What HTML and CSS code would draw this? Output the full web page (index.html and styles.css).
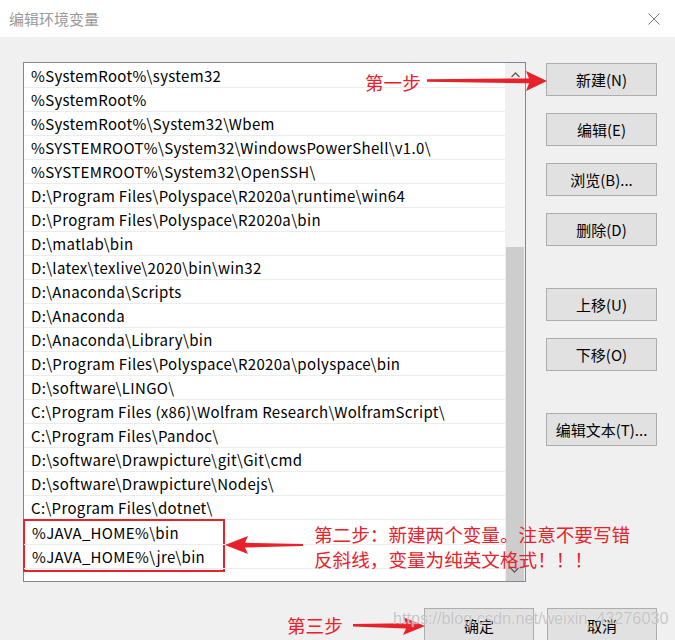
FILE: index.html
```html
<!DOCTYPE html>
<html lang="zh-CN">
<head>
    <meta charset="UTF-8">
    <title>编辑环境变量</title>
    <link rel="stylesheet" href="styles.css">
</head>
<body>
    <div class="window">
        <header class="titlebar">
            <span class="title">编辑环境变量</span>
            <svg class="close" width="12" height="12" viewBox="0 0 12 12">
                <path d="M0.5 0.5 L11.5 11.5 M11.5 0.5 L0.5 11.5" stroke="#7a7a7a" stroke-width="1" fill="none"/>
            </svg>
        </header>

        <div class="content">
            <div class="main">
                <div class="listbox">
                    <div class="rows">
                        <div class="row">%SystemRoot%\system32</div>
                        <div class="row">%SystemRoot%</div>
                        <div class="row">%SystemRoot%\System32\Wbem</div>
                        <div class="row">%SYSTEMROOT%\System32\WindowsPowerShell\v1.0\</div>
                        <div class="row">%SYSTEMROOT%\System32\OpenSSH\</div>
                        <div class="row">D:\Program Files\Polyspace\R2020a\runtime\win64</div>
                        <div class="row">D:\Program Files\Polyspace\R2020a\bin</div>
                        <div class="row">D:\matlab\bin</div>
                        <div class="row">D:\latex\texlive\2020\bin\win32</div>
                        <div class="row">D:\Anaconda\Scripts</div>
                        <div class="row">D:\Anaconda</div>
                        <div class="row">D:\Anaconda\Library\bin</div>
                        <div class="row">D:\Program Files\Polyspace\R2020a\polyspace\bin</div>
                        <div class="row">D:\software\LINGO\</div>
                        <div class="row">C:\Program Files (x86)\Wolfram Research\WolframScript\</div>
                        <div class="row">C:\Program Files\Pandoc\</div>
                        <div class="row">D:\software\Drawpicture\git\Git\cmd</div>
                        <div class="row">D:\software\Drawpicture\Nodejs\</div>
                        <div class="row">C:\Program Files\dotnet\</div>
                        <div class="highlight">
                            <div class="row">%JAVA_HOME%\bin</div>
                            <div class="row">%JAVA_HOME%\jre\bin</div>
                        </div>
                    </div>
                    <div class="scrollbar">
                        <div class="sb-arrow">
                            <svg width="9" height="6" viewBox="0 0 9 6"><path d="M0.5 5 L4.5 1 L8.5 5" stroke="#606060" stroke-width="1.4" fill="none"/></svg>
                        </div>
                        <div class="thumb"></div>
                        <svg class="sb-down" width="9" height="6" viewBox="0 0 9 6"><path d="M0.5 1 L4.5 5 L8.5 1" stroke="#606060" stroke-width="1.4" fill="none"/></svg>
                    </div>
                </div>

                <div class="side-buttons">
                    <button class="btn">新建(N)</button>
                    <button class="btn">编辑(E)</button>
                    <button class="btn">浏览(B)...</button>
                    <button class="btn">删除(D)</button>
                    <button class="btn group-start">上移(U)</button>
                    <button class="btn">下移(O)</button>
                    <button class="btn group-start">编辑文本(T)...</button>
                </div>
            </div>

            <div class="footer">
                <button class="btn">确定</button>
                <button class="btn">取消</button>
            </div>
        </div>

        <!-- annotations drawn on top of the screenshot -->
        <svg class="arrows" width="675" height="640" viewBox="0 0 675 640">
            <polygon points="427,79.3 529,78.4 526,71 547,81 526,91 529,83.2 427,81.7" fill="#e8212a"/>
            <polygon points="303,544 245,542.8 248,536 225,545 248,554 245,547.4 303,546" fill="#e8212a"/>
            <polygon points="353,624 406,623.2 403,617 425,626 403,635 406,628.6 353,626.4" fill="#e8212a"/>
        </svg>
        <div class="note note-1">第一步</div>
        <div class="note note-2">第二步：新建两个变量。注意不要写错<br>反斜线，变量为纯英文格式！！！</div>
        <div class="note note-3">第三步</div>
        <div class="watermark">https://blog.csdn.net/weixin_43276030</div>
    </div>
</body>
</html>
```

FILE: styles.css
```css
body {
    margin: 0;
    font-family: "Noto Sans CJK SC", "Noto Sans", sans-serif;
    color: #000;
}

.window {
    position: relative;
    width: 675px;
    height: 640px;
    overflow: hidden;
    background-color: #f0f0f0;
}

.titlebar {
    height: 37px;
    background-color: #fff;
    display: flex;
    align-items: center;
    justify-content: space-between;
    padding: 0 15px 0 9px;
    box-sizing: border-box;
}

.title {
    font-size: 15px;
    color: #999;
    line-height: 1;
}

.content {
    padding: 25px 18px 0 23px;
}

.main {
    display: flex;
    gap: 20px;
}

.listbox {
    width: 504px;
    height: 520px;
    box-sizing: border-box;
    border: 1px solid #82878f;
    background-color: #fff;
    display: flex;
}

.rows {
    flex: 1;
    padding-top: 1px;
}

.row {
    height: 24px;
    box-sizing: border-box;
    border-bottom: 1px solid #ececec;
    padding-left: 7px;
    font-size: 15px;
    letter-spacing: 0.33px;
    line-height: 23px;
    white-space: nowrap;
}

.highlight {
    margin: -1px 0 0 -1px;
    width: 202px;
    height: 53px;
    box-sizing: border-box;
    border: 2px solid #e8212a;
}

.highlight .row {
    width: 480px;
    margin-left: -1px;
    padding-left: 8px;
}

.scrollbar {
    position: relative;
    width: 20px;
    background-color: #f0f0f0;
    display: flex;
    flex-direction: column;
}

.sb-arrow {
    height: 24px;
    display: flex;
    align-items: center;
    justify-content: center;
}

.thumb {
    margin: 160px 1px 0 1px;
    flex: 1;
    background-color: #cdcdcd;
}

.sb-down {
    position: absolute;
    left: 5px;
    bottom: 8px;
}

.side-buttons {
    display: flex;
    flex-direction: column;
    gap: 17px;
    padding-top: 1px;
}

.btn {
    width: 111px;
    height: 33px;
    box-sizing: border-box;
    border: 1px solid #adadad;
    background-color: #e1e1e1;
    font-family: "Noto Sans CJK SC", "Noto Sans", sans-serif;
    font-size: 15px;
    color: #000;
    padding: 0;
}

.group-start {
    margin-top: 25px;
}

.footer {
    display: flex;
    justify-content: flex-end;
    gap: 13px;
    margin-top: 26px;
}

.footer .btn {
    width: 110px;
    height: 40px;
    padding-bottom: 6px;
}

.arrows {
    position: absolute;
    left: 0;
    top: 0;
    pointer-events: none;
}

.note {
    position: absolute;
    color: #e8212a;
    font-size: 18.6px;
    line-height: 25px;
}

.note-1 {
    left: 365px;
    top: 69px;
}

.note-2 {
    left: 314px;
    top: 521px;
}

.note-3 {
    left: 287px;
    top: 612px;
}

.watermark {
    position: absolute;
    left: 393px;
    top: 609px;
    font-family: "Liberation Sans", Arial, sans-serif;
    font-size: 16.2px;
    color: rgba(160, 160, 160, 0.6);
    text-shadow: 0 0 1px rgba(255, 255, 255, 0.9);
    white-space: nowrap;
}
```
